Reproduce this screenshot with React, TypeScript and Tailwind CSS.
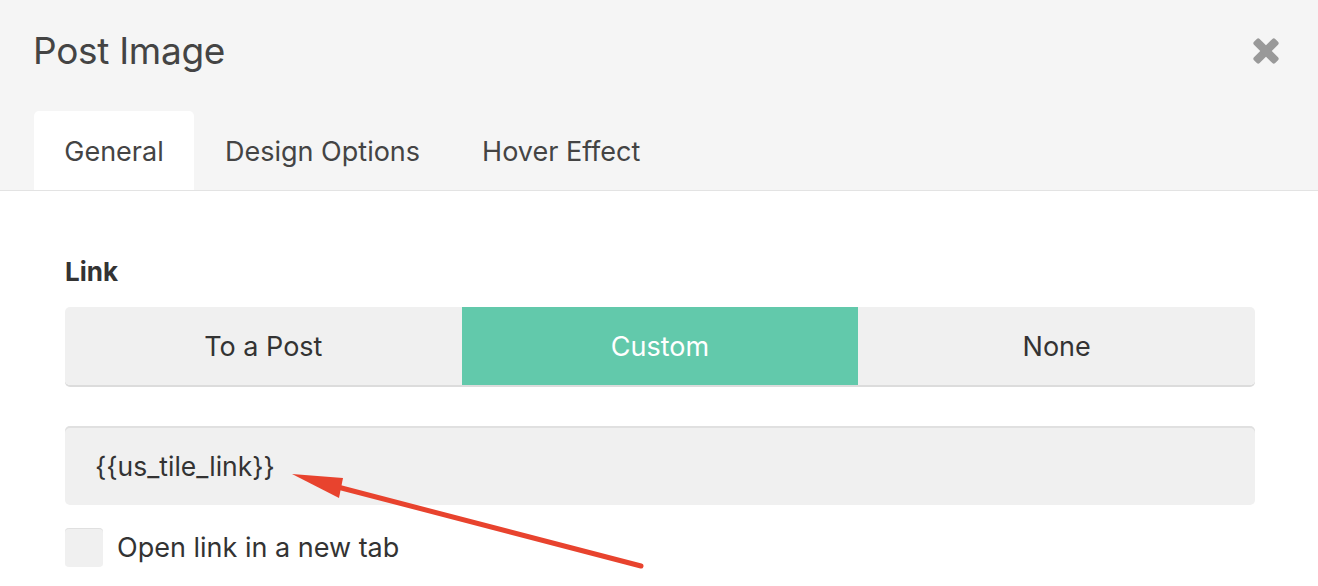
import { useState } from 'react';

const OPCIONES = ['To a Post', 'Custom', 'None'];

function CloseIcon() {
  return (
    <svg width="32" height="32" viewBox="0 0 32 32" className="text-[#999]">
      <g fill="currentColor" transform="rotate(45 16 16)">
        <rect x="12" y="1" width="8" height="30" rx="2" />
        <rect x="1" y="12" width="30" height="8" rx="2" />
      </g>
    </svg>
  );
}

export default function App() {
  const [link, setLink] = useState('Custom');

  return (
    <div className="relative w-[1318px] h-[586px] overflow-hidden bg-white font-['Inter',sans-serif] text-[#333]">
      {/* Cabecera */}
      <div className="bg-[#f5f5f5] border-b border-[#e3e3e3]">
        <div className="flex items-start justify-between pl-[33px] pr-[36px] pt-[29px]">
          <h1 className="text-[37px] leading-[44px] text-[#444] tracking-[-0.3px]">Post Image</h1>
          <div className="mt-[6px]">
            <CloseIcon />
          </div>
        </div>
        <div className="flex pl-[34px] mt-[38px]">
          <div className="w-[160px] h-[79px] pt-[3px] bg-white rounded-t-[5px] flex items-center justify-center text-[27px] text-[#444] -mb-px">
            General
          </div>
          <div className="px-[31px] h-[79px] pt-[3px] flex items-center text-[27px] text-[#444]">Design Options</div>
          <div className="px-[31px] h-[79px] pt-[3px] flex items-center text-[27px] text-[#444]">Hover Effect</div>
        </div>
      </div>

      {/* Contenido */}
      <div className="pl-[65px] pr-[63px] pt-[63px]">
        <div className="text-[26px] font-bold text-[#333] leading-[35px]">Link</div>
        <div className="flex mt-[18px] rounded-[5px] overflow-hidden shadow-[0_2px_0_#dcdcdc]">
          {OPCIONES.map((o) => (
            <button
              key={o}
              onClick={() => setLink(o)}
              className={
                o === link
                  ? 'flex-1 h-[78px] pt-[3px] bg-[#62c9ab] text-white text-[27px]'
                  : 'flex-1 h-[78px] pt-[3px] bg-[#f0f0f0] text-[#333] text-[27px]'
              }
            >
              {o}
            </button>
          ))}
        </div>
        <div className="mt-[41px] h-[79px] pt-[2px] bg-[#f0f0f0] rounded-[5px] shadow-[inset_0_2px_0_#e0e0e0] flex items-center px-[30px] text-[26.5px] text-[#333]">
          {'{{us_tile_link}}'}
        </div>
        <label className="flex items-center mt-[21px] gap-[14px]">
          <span className="w-[38px] h-[39px] bg-[#f0f0f0] rounded-[4px] shadow-[inset_0_1px_0_#e0e0e0]" />
          <span className="text-[27px] text-[#333] pt-[2px]">Open link in a new tab</span>
        </label>
      </div>

      {/* Flecha de anotación */}
      <svg className="absolute inset-0 pointer-events-none" width="1318" height="586">
        <line x1="641" y1="566" x2="330" y2="485" stroke="#e8432e" strokeWidth="5" strokeLinecap="round" />
        <polygon points="292,474 343,478 339,498" fill="#e8432e" />
      </svg>
    </div>
  );
}
